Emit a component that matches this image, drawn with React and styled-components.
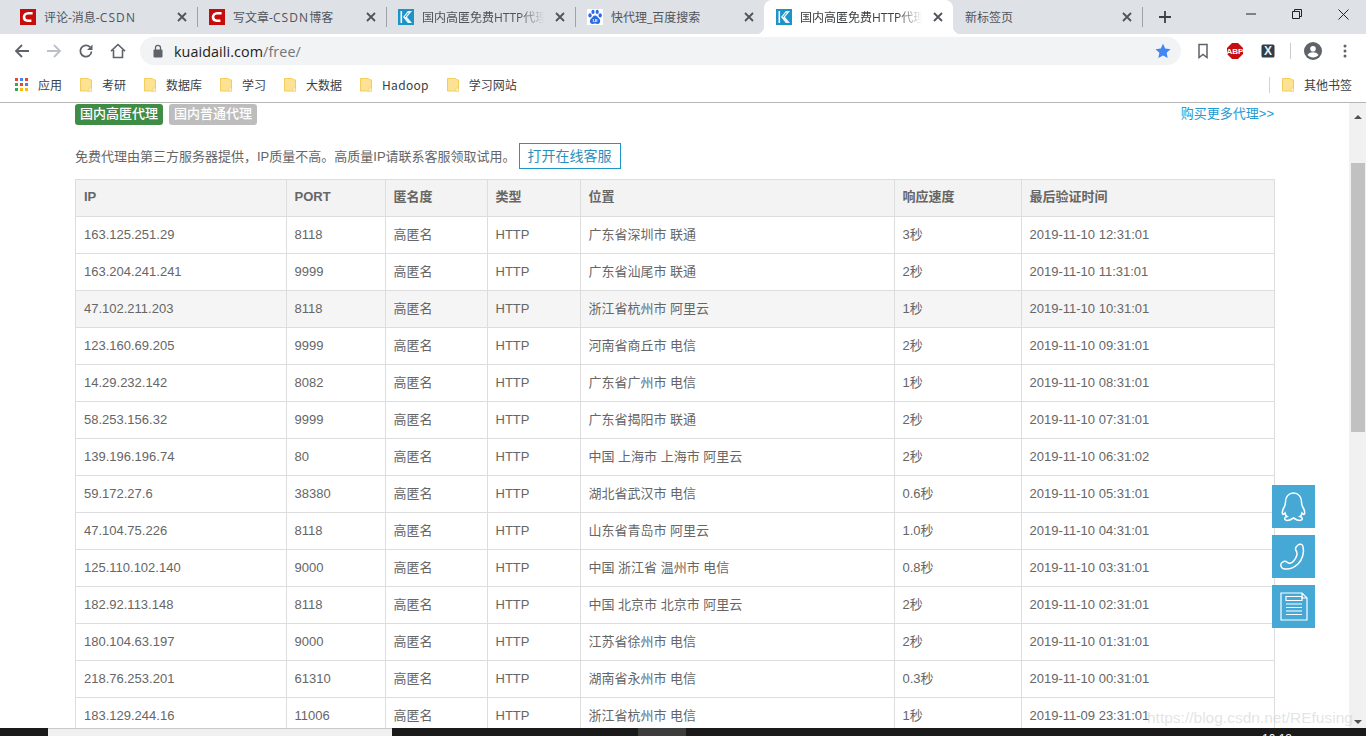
import React from "react";
import styled, { createGlobalStyle } from "styled-components";

const Global = createGlobalStyle`
  html, body { margin: 0; padding: 0; height: 100%; overflow: hidden; background: #fff; }
  #root { height: 100%; }
  * { box-sizing: border-box; }
`;

const CJK = `"Noto Sans CJK SC", sans-serif`;
const SANS = `"Liberation Sans", "Noto Sans CJK SC", sans-serif`;

const Shell = styled.div`
  position: relative;
  height: 736px;
  width: 1366px;
  display: flex;
  flex-direction: column;
  overflow: hidden;
  font-family: ${SANS};
`;

/* ---------- tabs ---------- */
const TabStrip = styled.div`
  height: 34px;
  flex: none;
  background: #dee1e6;
  display: flex;
  padding-left: 8px;
`;
const Tab = styled.div`
  position: relative;
  width: 189px;
  height: 34px;
  display: flex;
  align-items: center;
  padding: 0 7px 0 12px;
  gap: 8px;
  background: ${(p) => (p.$active ? "#fff" : "transparent")};
  border-radius: ${(p) => (p.$active ? "8px 8px 0 0" : "0")};
  ${(p) =>
    p.$active &&
    `
    &::before, &::after {
      content: "";
      position: absolute;
      bottom: 0;
      width: 8px;
      height: 8px;
    }
    &::before { left: -8px; background: radial-gradient(circle at 0 0, #dee1e6 8px, #fff 8.5px); }
    &::after { right: -8px; background: radial-gradient(circle at 100% 0, #dee1e6 8px, #fff 8.5px); }
  `}
  ${(p) =>
    p.$sep &&
    `
    &::after {
      content: "";
      position: absolute;
      right: -1px;
      top: 7px;
      height: 20px;
      width: 1px;
      background: #9fa2a6;
    }
  `}
`;
const TabTitle = styled.span`
  flex: 1;
  min-width: 0;
  white-space: nowrap;
  overflow: hidden;
  padding-bottom: 1px;
  font: 12px "Open Sans", ${CJK};
  color: ${(p) => (p.$active ? "#3c4043" : "#50545a")};
  ${(p) =>
    p.$fade &&
    `
    -webkit-mask-image: linear-gradient(to right, #000 calc(100% - 24px), transparent);
    mask-image: linear-gradient(to right, #000 calc(100% - 24px), transparent);
  `}
`;
const LatinRun = styled.span`
  letter-spacing: 1.1px;
`;
const TabClose = styled.svg`
  width: 16px;
  height: 16px;
  flex: none;
`;
const NewTab = styled.svg`
  width: 14px;
  height: 14px;
  margin: 10px 0 0 16px;
  flex: none;
`;
const WindowControls = styled.div`
  margin-left: auto;
  display: flex;
  height: 28px;
  align-items: center;
  width: 138px;
`;
const WindowButton = styled.div`
  width: 46px;
  display: flex;
  justify-content: center;
`;

/* ---------- toolbar ---------- */
const Toolbar = styled.div`
  height: 37px;
  flex: none;
  background: #fff;
  display: flex;
  align-items: center;
  padding: 0 0 3px 14px;
`;
const NavButton = styled.svg`
  width: 16px;
  height: 16px;
  flex: none;
  margin-right: 16px;
`;
const UrlBar = styled.div`
  width: 1041px;
  height: 28px;
  margin-left: -2px;
  flex: none;
  background: #f1f3f4;
  border-radius: 14px;
  display: flex;
  align-items: center;
  padding: 0 10px 0 12px;
`;
const LockIcon = styled.svg`
  width: 12px;
  height: 14px;
  margin-right: 10px;
  flex: none;
`;
const UrlText = styled.div`
  flex: 1;
  font: 14.3px "Open Sans", sans-serif;
  color: #202124;
  letter-spacing: 0.1px;
  span { color: #70757a; }
`;
const ToolIcons = styled.div`
  display: flex;
  align-items: center;
  margin-left: 14px;
`;
const ToolIcon = styled.svg`
  width: ${(p) => p.$w || 16}px;
  height: ${(p) => p.$w || 16}px;
  margin-left: ${(p) => p.$ml || 0}px;
  flex: none;
`;
const ToolDivider = styled.div`
  width: 1px;
  height: 16px;
  background: #c8cacd;
  margin: 0 13px 0 15px;
`;

/* ---------- bookmarks ---------- */
const BookmarkBar = styled.div`
  height: 32px;
  flex: none;
  background: #fff;
  border-bottom: 1px solid #b6b6b6;
  display: flex;
  align-items: center;
  padding: 0 14px 4px 15px;
  gap: 18px;
`;
const Bookmark = styled.div`
  display: flex;
  align-items: center;
  gap: 10px;
  font: 12px ${CJK};
  color: #3c4043;
  letter-spacing: ${(p) => (p.$wide ? "0.3px" : "0")};
`;
const BookmarkRight = styled(Bookmark)`
  margin-left: auto;
  padding-left: 12px;
  border-left: 1px solid #d0d2d4;
  height: 16px;
`;

/* ---------- page ---------- */
const PageArea = styled.div`
  flex: 1;
  min-height: 0;
  display: flex;
  overflow: hidden;
  background: #fff;
`;
const Content = styled.div`
  flex: 1;
  min-width: 0;
  padding: 1px 74px 0 75px;
`;
const TagRow = styled.div`
  display: flex;
  align-items: flex-start;
  gap: 6px;
  height: 39px;
  padding-right: 1px;
`;
const Tag = styled.div`
  height: 21px;
  width: 88px;
  text-align: center;
  border-radius: 3px;
  background: ${(p) => (p.$on ? "#3f8c47" : "#bdbdbd")};
  color: #fff;
  font: 500 13px/20px ${SANS};
`;
const BuyLink = styled.a`
  margin-left: auto;
  margin-top: 1px;
  font: 13px/18px ${SANS};
  color: #2299d3;
`;
const Notice = styled.div`
  display: flex;
  align-items: center;
  height: 26px;
  font: 13px ${SANS};
  color: #666;
  margin-bottom: 10px;
`;
const NoticeText = styled.span`
  margin-top: -2px;
`;
const ServiceButton = styled.div`
  margin-left: 3px;
  width: 102px;
  height: 26px;
  border: 1px solid #1e96c8;
  color: #2a8fbd;
  font: 14px/24px ${SANS};
  text-align: center;
`;
const Table = styled.table`
  width: 1199px;
  border-collapse: collapse;
  table-layout: fixed;
  font: 13px/18px ${SANS};
  color: #666;
`;
const Th = styled.th`
  height: 37px;
  padding: 0 8px 2px;
  text-align: left;
  font-weight: bold;
  background: #f3f3f3;
  border: 1px solid #ddd;
  color: #666;
  &:not(:first-child) { padding-left: 7.5px; }
`;
const Row = styled.tr`
  background: ${(p) => (p.$hover ? "#f5f5f5" : "#fff")};
`;
const Td = styled.td`
  height: 37px;
  padding: 0 8px;
  border: 1px solid #ddd;
  white-space: nowrap;
  &:not(:first-child) { padding-left: 7.5px; }
`;

/* ---------- scrollbar ---------- */
const Scrollbar = styled.div`
  width: 17px;
  flex: none;
  background: #f1f1f1;
  display: flex;
  flex-direction: column;
  align-items: center;
  position: relative;
`;
const ScrollArrow = styled.div`
  width: 0;
  height: 0;
  margin-top: 12px;
  border-left: 4px solid transparent;
  border-right: 4px solid transparent;
  border-bottom: 4px solid #505050;
`;
const ScrollThumb = styled.div`
  width: 14px;
  height: 269px;
  margin-top: 44px;
  margin-left: 1px;
  background: #c1c1c1;
`;
const ScrollDown = styled.div`
  position: absolute;
  bottom: 4px;
  left: 5px;
  width: 0;
  height: 0;
  border-left: 4px solid transparent;
  border-right: 4px solid transparent;
  border-top: 4px solid #505050;
`;

/* ---------- float ---------- */
const FloatBar = styled.div`
  position: absolute;
  left: 1272px;
  top: 485px;
  display: flex;
  flex-direction: column;
  gap: 7px;
`;
const FloatButton = styled.div`
  width: 43px;
  height: 43px;
  background: #46a8d5;
  display: flex;
  align-items: center;
  justify-content: center;
`;

const Taskbar = styled.div`
  height: 8px;
  flex: none;
  background: #1a1a1a;
  display: flex;
  overflow: hidden;
  position: relative;
`;
const TaskSearch = styled.div`
  width: 344px;
  margin-left: 48px;
  background: #f0f0f0;
  border-top: 1px solid #c8c8c8;
`;
const TaskActive = styled.div`
  width: 48px;
  margin-left: 246px;
  background: #3c3c3c;
`;
const Clock = styled.div`
  position: absolute;
  left: 1262px;
  top: 4px;
  font: 12px "Liberation Sans", sans-serif;
  color: #fff;
`;
const Watermark = styled.div`
  position: absolute;
  left: 1147px;
  top: 708px;
  font: 15.5px/20px "Liberation Sans", sans-serif;
  color: rgba(205, 205, 205, 0.55);
  white-space: nowrap;
  pointer-events: none;
`;

/* ---------- drawings ---------- */
const Csdn = () => (
  <svg width="16" height="16" viewBox="0 0 16 16" style={{ flex: "none" }}>
    <rect width="16" height="16" fill="#c70c0c" />
    <path d="M12.6 4.2H8.2C5.8 4.2 4 6 4 8.1s1.6 3.600 3.800 3.600h3.600" fill="none" stroke="#fff" strokeWidth="2.600" />
  </svg>
);
const Kuai = () => (
  <svg width="16" height="16" viewBox="0 0 16 16" style={{ flex: "none" }}>
    <rect width="16" height="16" fill="#1c94c8" />
    <path d="M2.500 2v12h1.600V2z" fill="#fff" />
    <path d="M14 2H9.800L5 8l4.800 6H14L9 8z" fill="#fff" opacity=".9" />
    <path d="M7 8l3.400-4.200" stroke="#1c94c8" strokeWidth=".9" />
  </svg>
);
const Baidu = () => (
  <svg width="16" height="16" viewBox="0 0 16 16" style={{ flex: "none" }}>
    <rect width="16" height="16" fill="#fff" />
    <g fill="#2d6be4">
      <ellipse cx="3" cy="6.400" rx="1.700" ry="2.100" />
      <ellipse cx="6" cy="2.900" rx="1.600" ry="2.100" />
      <ellipse cx="10.200" cy="2.900" rx="1.600" ry="2.100" />
      <ellipse cx="13.200" cy="6.400" rx="1.700" ry="2.100" />
      <path d="M8 6.500c-2 0-2.500 2-4 3.300C2.500 11 2.300 15 5.500 15c1 0 1.500-.4 2.500-.4s1.700.4 2.700.4c3 0 3-4 1.500-5.200C11 8.500 10 6.500 8 6.500z" />
    </g>
    <path d="M6.300 10v2.300c0 .8 1.100.8 1.300 0m1-2.300v3M9.800 10v3" stroke="#fff" strokeWidth=".8" fill="none" />
  </svg>
);
const Close = () => (
  <TabClose viewBox="0 0 16 16">
    <path d="M4 4l8 8M12 4l-8 8" stroke="#50545a" strokeWidth="1.800" />
  </TabClose>
);
const Folder = () => (
  <svg width="12" height="14" viewBox="0 0 12 14" style={{ flex: "none" }}>
    <path d="M.5.500h8l1 1 2 .5v11H.5z" fill="#fde293" stroke="#f2cd5c" />
    <rect x="9" y="10" width="2.500" height="3.500" fill="#fff3c8" stroke="#f2cd5c" strokeWidth=".6" />
  </svg>
);
const Apps = () => (
  <svg width="13" height="13" viewBox="0 0 13 13" style={{ flex: "none" }}>
    {[
      ["#ea4335", "#4285f4", "#ea4335"],
      ["#34a853", "#ea4335", "#4285f4"],
      ["#34a853", "#fbbc05", "#fbbc05"],
    ].map((r, y) =>
      r.map((c, x) => <rect key={x + "-" + y} x={x * 5} y={y * 5} width="3" height="3" fill={c} />)
    )}
  </svg>
);

const tabs = [
  { icon: <Csdn />, title: <>评论-消息-<LatinRun>CSDN</LatinRun></>, sep: true },
  { icon: <Csdn />, title: <>写文章-<LatinRun>CSDN</LatinRun>博客</>, sep: true },
  { icon: <Kuai />, title: "国内高匿免费HTTP代理IP", fade: true, sep: true },
  { icon: <Baidu />, title: "快代理_百度搜索" },
  { icon: <Kuai />, title: "国内高匿免费HTTP代理IP", fade: true, active: true },
  { title: "新标签页", sep: true },
];

const bookmarks = ["考研", "数据库", "学习", "大数据", "Hadoop", "学习网站"];

const cols = [211, 99, 102, 93, 314, 127, 253];
const heads = ["IP", "PORT", "匿名度", "类型", "位置", "响应速度", "最后验证时间"];
const rows = [
  ["163.125.251.29", "8118", "广东省深圳市 联通", "3秒", "2019-11-10 12:31:01"],
  ["163.204.241.241", "9999", "广东省汕尾市 联通", "2秒", "2019-11-10 11:31:01"],
  ["47.102.211.203", "8118", "浙江省杭州市 阿里云", "1秒", "2019-11-10 10:31:01"],
  ["123.160.69.205", "9999", "河南省商丘市 电信", "2秒", "2019-11-10 09:31:01"],
  ["14.29.232.142", "8082", "广东省广州市 电信", "1秒", "2019-11-10 08:31:01"],
  ["58.253.156.32", "9999", "广东省揭阳市 联通", "2秒", "2019-11-10 07:31:01"],
  ["139.196.196.74", "80", "中国 上海市 上海市 阿里云", "2秒", "2019-11-10 06:31:02"],
  ["59.172.27.6", "38380", "湖北省武汉市 电信", "0.6秒", "2019-11-10 05:31:01"],
  ["47.104.75.226", "8118", "山东省青岛市 阿里云", "1.0秒", "2019-11-10 04:31:01"],
  ["125.110.102.140", "9000", "中国 浙江省 温州市 电信", "0.8秒", "2019-11-10 03:31:01"],
  ["182.92.113.148", "8118", "中国 北京市 北京市 阿里云", "2秒", "2019-11-10 02:31:01"],
  ["180.104.63.197", "9000", "江苏省徐州市 电信", "2秒", "2019-11-10 01:31:01"],
  ["218.76.253.201", "61310", "湖南省永州市 电信", "0.3秒", "2019-11-10 00:31:01"],
  ["183.129.244.16", "11006", "浙江省杭州市 电信", "1秒", "2019-11-09 23:31:01"],
];

export default function App() {
  return (
    <Shell>
      <Global />
      <TabStrip>
        {tabs.map((t, i) => (
          <Tab key={i} $active={t.active} $sep={t.sep}>
            {t.icon}
            <TabTitle $active={t.active} $fade={t.fade}>{t.title}</TabTitle>
            <Close />
          </Tab>
        ))}
        <NewTab viewBox="0 0 14 14">
          <path d="M7 1v12M1 7h12" stroke="#3c4043" strokeWidth="1.800" />
        </NewTab>
        <WindowControls>
          <WindowButton>
            <svg width="10" height="10" viewBox="0 0 10 10"><path d="M0 5h10" stroke="#222" /></svg>
          </WindowButton>
          <WindowButton>
            <svg width="10" height="10" viewBox="0 0 10 10"><path d="M.5 2.500h7v7h-7zM2.500 2.500v-2h7v7h-2" fill="none" stroke="#222" /></svg>
          </WindowButton>
          <WindowButton>
            <svg width="11" height="11" viewBox="0 0 11 11"><path d="M.5.500l10 10M10.500.500l-10 10" stroke="#222" /></svg>
          </WindowButton>
        </WindowControls>
      </TabStrip>

      <Toolbar>
        <NavButton viewBox="0 0 16 16"><path d="M15 8H2M8 2L2 8l6 6" fill="none" stroke="#5f6368" strokeWidth="1.800" /></NavButton>
        <NavButton viewBox="0 0 16 16"><path d="M1 8h13M8 2l6 6-6 6" fill="none" stroke="#bdc1c6" strokeWidth="1.800" /></NavButton>
        <NavButton viewBox="0 0 16 16"><path d="M13.500 8.500A5.600 5.600 0 1 1 12 4.200" fill="none" stroke="#5f6368" strokeWidth="1.800" /><path d="M14.500 1.500v5.500H9z" fill="#5f6368" /></NavButton>
        <NavButton viewBox="0 0 16 16"><path d="M1 8.200L8 1.500l7 6.700M3.500 7v7.500h9V7" fill="none" stroke="#5f6368" strokeWidth="1.600" /></NavButton>
        <UrlBar>
          <LockIcon viewBox="0 0 12 14">
            <rect x="1.500" y="5.500" width="9" height="8" rx="1" fill="#5f6368" />
            <path d="M3.500 6V3.800a2.500 2.500 0 0 1 5 0V6" fill="none" stroke="#5f6368" strokeWidth="1.300" />
          </LockIcon>
          <UrlText>kuaidaili.com<span>/free/</span></UrlText>
          <svg width="16" height="16" viewBox="0 0 16 16">
            <path d="M8 .8l2.200 4.800 5.300.6-3.900 3.600 1.100 5.200L8 12.400l-4.700 2.600 1.100-5.200L.5 6.200l5.300-.6z" fill="#4285f4" />
          </svg>
        </UrlBar>
        <ToolIcons>
          <ToolIcon viewBox="0 0 16 16"><path d="M4 1.500h8v13l-4-3-4 3z" fill="none" stroke="#5f6368" strokeWidth="1.500" /></ToolIcon>
          <ToolIcon viewBox="0 0 16 16" $ml={16}>
            <path d="M5 0h6l5 5v6l-5 5H5l-5-5V5z" fill="#c70d0d" />
            <text x="8" y="11" textAnchor="middle" fontSize="8" fontWeight="bold" fontFamily="Liberation Sans" fill="#fff">ABP</text>
          </ToolIcon>
          <ToolIcon viewBox="0 0 14 14" $w={14} $ml={18}>
            <rect width="13" height="13" x=".5" y=".5" rx="1.500" fill="#2f3d46" />
            <text x="7" y="11.200" textAnchor="middle" fontSize="12" fontWeight="bold" fontFamily="Liberation Sans" fill="#e8eef2">X</text>
          </ToolIcon>
          <ToolDivider />
          <ToolIcon viewBox="0 0 18 18" $w={18}>
            <circle cx="9" cy="9" r="9" fill="#5f6368" />
            <circle cx="9" cy="6.800" r="2.800" fill="#fff" />
            <path d="M3.500 13c1.200-2 3.300-2.700 5.500-2.700s4.300.7 5.500 2.700c-1.300 1.600-3.300 2.500-5.500 2.500S4.800 14.600 3.500 13z" fill="#fff" />
          </ToolIcon>
          <ToolIcon viewBox="0 0 14 14" $w={14} $ml={16}>
            <g fill="#5f6368"><circle cx="7" cy="2" r="1.500" /><circle cx="7" cy="7" r="1.500" /><circle cx="7" cy="12" r="1.500" /></g>
          </ToolIcon>
        </ToolIcons>
      </Toolbar>

      <BookmarkBar>
        <Bookmark><Apps />应用</Bookmark>
        {bookmarks.map((b) => (
          <Bookmark key={b} $wide={b === "Hadoop"}><Folder />{b}</Bookmark>
        ))}
        <BookmarkRight><Folder />其他书签</BookmarkRight>
      </BookmarkBar>

      <PageArea>
        <Content>
          <TagRow>
            <Tag $on>国内高匿代理</Tag>
            <Tag>国内普通代理</Tag>
            <BuyLink>购买更多代理&gt;&gt;</BuyLink>
          </TagRow>
          <Notice>
            <NoticeText>免费代理由第三方服务器提供，IP质量不高。高质量IP请联系客服领取试用。</NoticeText>
            <ServiceButton>打开在线客服</ServiceButton>
          </Notice>
          <Table>
            <colgroup>
              {cols.map((w, i) => <col key={i} style={{ width: w }} />)}
            </colgroup>
            <thead>
              <tr>{heads.map((h) => <Th key={h}>{h}</Th>)}</tr>
            </thead>
            <tbody>
              {rows.map((r, i) => (
                <Row key={i} $hover={i === 2}>
                  <Td>{r[0]}</Td>
                  <Td>{r[1]}</Td>
                  <Td>高匿名</Td>
                  <Td>HTTP</Td>
                  <Td>{r[2]}</Td>
                  <Td>{r[3]}</Td>
                  <Td>{r[4]}</Td>
                </Row>
              ))}
            </tbody>
          </Table>
        </Content>
        <Scrollbar>
          <ScrollArrow />
          <ScrollThumb />
          <ScrollDown />
        </Scrollbar>
      </PageArea>

      <Taskbar>
        <TaskSearch />
        <TaskActive />
        <Clock>10:18</Clock>
      </Taskbar>

      <FloatBar>
        <FloatButton>
          <svg width="29" height="32" viewBox="0 0 29 32" fill="none" stroke="#fff" strokeWidth="1.500">
            <path d="M14.500 2c-5 0-8 4-8 9 0 2-.2 3.500-1.500 5.500-1.300 2-2 4.500-1.500 6.500.5 1 1.500 0 2.500-1 .3 1.500 1 3 2 3.500-1.500.5-3 1.500-2 3 1.500 1.500 5 .8 8.500-1.500 3.500 2.300 7 3 8.500 1.500 1-1.500-.5-2.500-2-3 1-.5 1.700-2 2-3.500 1 1 2 2 2.500 1 .5-2-.2-4.500-1.500-6.500-1.300-2-1.500-3.500-1.500-5.500 0-5-3-9-8-9z" />
          </svg>
        </FloatButton>
        <FloatButton>
          <svg width="30" height="30" viewBox="0 0 30 30" fill="none" stroke="#fff" strokeWidth="1.500">
            <path d="M19 3c1.500-1.500 4.500-1 5 1.500 1.500 6-.5 13-5 17.500-4 3.500-10 6-15 4.500C1.500 25.500 1 22 3 20.500c1.500-1 3-1.500 4-1 1 .5 2 1.800 3.500 1.800 2 0 4.500-2.500 6-5 1.300-2.300 2-4.500 1.300-6-.5-1.500-1.300-2-1.300-3.500 0-1.500 1.500-3 2.500-3.800z" />
          </svg>
        </FloatButton>
        <FloatButton>
          <svg width="28" height="29" viewBox="0 0 28 29" fill="none" stroke="#fff">
            <path d="M1 1h21l5 5v22H1zM22 1v5h5" strokeWidth="1.200" />
            <path d="M6 4.500h16v4H6z" strokeWidth="1.200" />
            <path d="M6 12h16M6 15.500h16M6 19h16M6 22.500h16" strokeWidth="1.200" />
          </svg>
        </FloatButton>
      </FloatBar>
      <Watermark>https://blog.csdn.net/REfusing</Watermark>
    </Shell>
  );
}
